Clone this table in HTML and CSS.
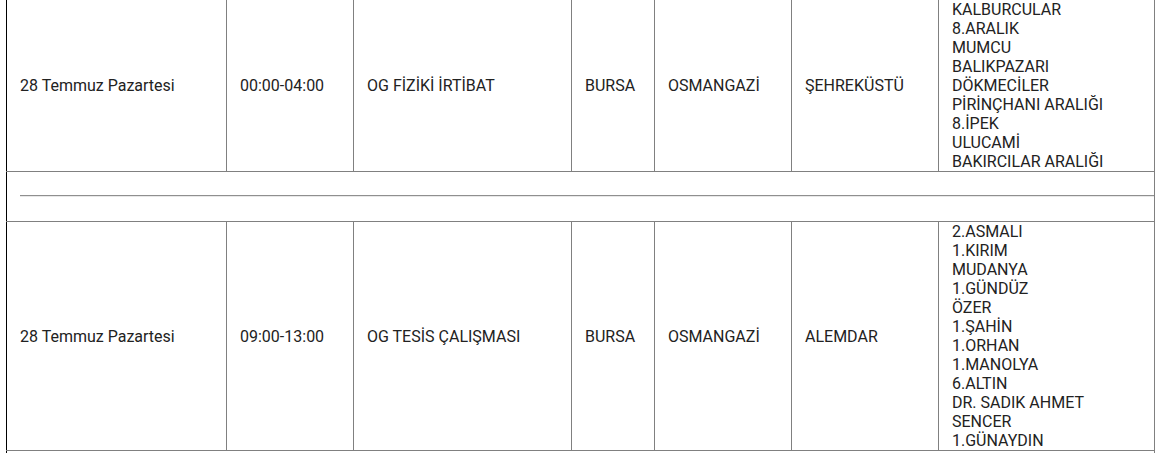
FILE: index.html
```html
<!DOCTYPE html>
<html lang="tr">
<head>
<meta charset="utf-8">
<title>Kesinti Listesi</title>
<link rel="stylesheet" href="styles.css">
</head>
<body>
<div class="wrap">
<table class="outages">
<colgroup>
<col class="c-date"><col class="c-time"><col class="c-type"><col class="c-city"><col class="c-district"><col class="c-hood"><col class="c-streets">
</colgroup>
<tbody>
<tr>
<td>28 Temmuz Pazartesi</td>
<td>00:00-04:00</td>
<td>OG FİZİKİ İRTİBAT</td>
<td>BURSA</td>
<td>OSMANGAZİ</td>
<td>ŞEHREKÜSTÜ</td>
<td class="streets">KALBURCULAR<br>8.ARALIK<br>MUMCU<br>BALIKPAZARI<br>DÖKMECİLER<br>PİRİNÇHANI ARALIĞI<br>8.İPEK<br>ULUCAMİ<br>BAKIRCILAR ARALIĞI</td>
</tr>
<tr class="sep">
<td colspan="7"><hr></td>
</tr>
<tr>
<td>28 Temmuz Pazartesi</td>
<td>09:00-13:00</td>
<td>OG TESİS ÇALIŞMASI</td>
<td>BURSA</td>
<td>OSMANGAZİ</td>
<td>ALEMDAR</td>
<td class="streets">2.ASMALI<br>1.KIRIM<br>MUDANYA<br>1.GÜNDÜZ<br>ÖZER<br>1.ŞAHİN<br>1.ORHAN<br>1.MANOLYA<br>6.ALTIN<br>DR. SADIK AHMET<br>SENCER<br>1.GÜNAYDIN</td>
</tr>
<tr class="sep">
<td colspan="7"><hr></td>
</tr>
</tbody>
</table>
</div>
</body>
</html>
```

FILE: styles.css
```css
html, body {
  margin: 0;
  padding: 0;
  background: #fff;
}
body {
  font-family: Roboto, "Liberation Sans", Arial, sans-serif;
  font-size: 16px;
  color: #222;
  overflow: hidden;
}
.wrap {
  padding-left: 6px;
  margin-top: -1px;
}
.outages {
  border-collapse: collapse;
  table-layout: fixed;
  width: 1148px;
}
.c-date { width: 220px; }
.c-time { width: 127px; }
.c-type { width: 218px; }
.c-city { width: 83px; }
.c-district { width: 137px; }
.c-hood { width: 147px; }
.c-streets { width: 216px; }
.outages td {
  border: 1px solid #808080;
  padding: 0 13px;
  line-height: 19px;
  vertical-align: middle;
  text-align: left;
}
.outages td:first-child {
  border-left-color: #000;
}
.outages td.streets {
  padding: 0 13px;
}
.outages tr.sep td {
  padding: 23px 0 24px 13px;
  line-height: 0;
}
.outages hr {
  margin: 0;
  height: 0;
  border: 0;
  border-top: 1px solid #8f8f8f;
  border-bottom: 1px solid #e8e8e8;
}
```
